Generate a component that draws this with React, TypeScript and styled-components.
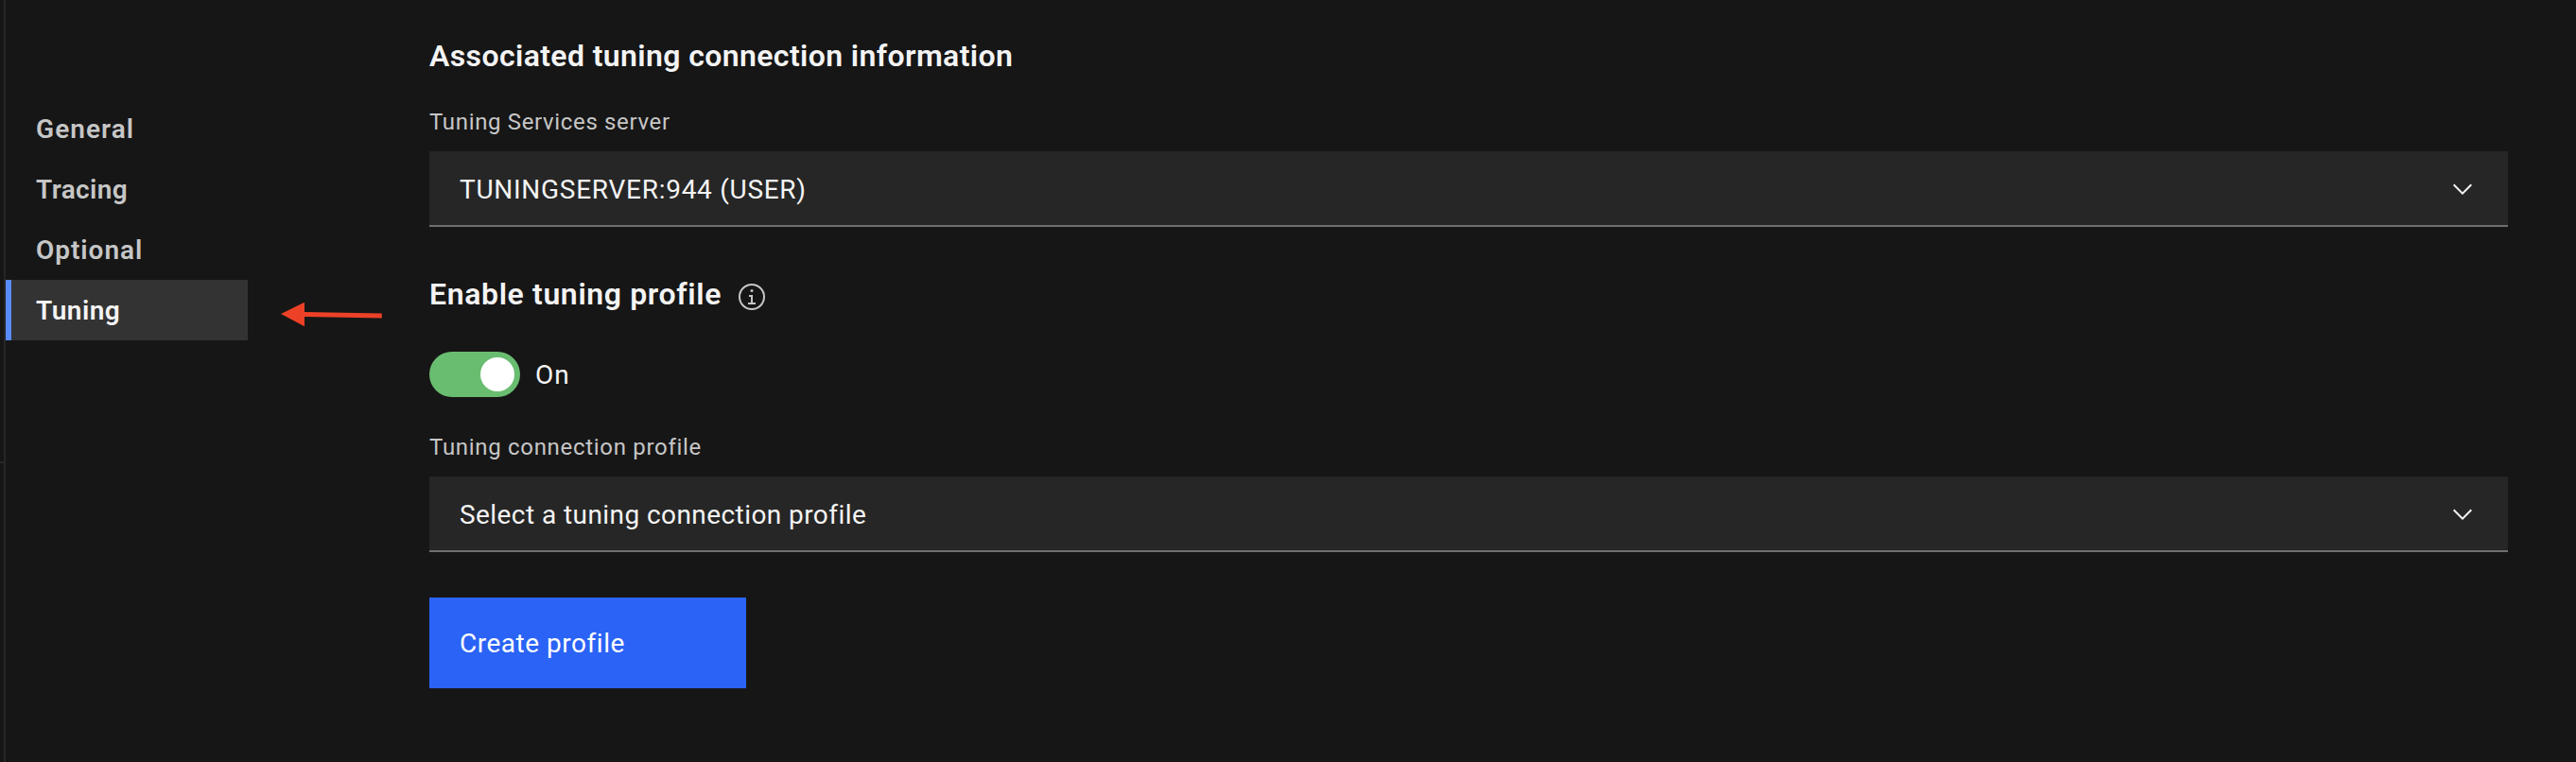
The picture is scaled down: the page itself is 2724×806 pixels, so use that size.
import React from "react";
import styled, { createGlobalStyle } from "styled-components";

const GlobalStyle = createGlobalStyle`
  * { box-sizing: border-box; }
  body {
    margin: 0;
    background: #161616;
    color: #f4f4f4;
    font-family: Roboto, "Liberation Sans", sans-serif;
    font-variant-ligatures: none;
  }
`;

const Page = styled.div`
  display: flex;
  height: 806px;
  overflow: hidden;
  background: #161616;
`;

const Rail = styled.div`
  flex: none;
  width: 6px;
  border-right: 2px solid #262626;
`;

const RailSection = styled.div`
  height: 490px;
  border-bottom: 2px solid #262626;
`;

const SideNav = styled.nav`
  flex: none;
  width: 256px;
  padding-top: 104px;
`;

const NavItem = styled.a<{ $active?: boolean; $tracking: number }>`
  display: flex;
  align-items: center;
  height: 64px;
  padding-top: 2px;
  padding-left: ${(p) => (p.$active ? 26 : 32)}px;
  border-left: ${(p) => (p.$active ? "6px solid #588bfb" : "0")};
  background: ${(p) => (p.$active ? "#333333" : "transparent")};
  color: ${(p) => (p.$active ? "#f4f4f4" : "#c6c6c6")};
  font-size: 28px;
  font-weight: 600;
  line-height: 36px;
  letter-spacing: ${(p) => p.$tracking}px;
`;

const Pointer = styled.div`
  flex: none;
  width: 192px;
  padding: 316px 0 0 34px;
`;

const Content = styled.main`
  display: flex;
  flex-direction: column;
  width: 2198px;
  padding-top: 39px;
`;

const HeadingRow = styled.div`
  display: flex;
  align-items: center;
  gap: 16px;
  height: 40px;
`;

const Heading = styled.h2<{ $tracking: number }>`
  margin: 0;
  font-size: 32px;
  font-weight: 600;
  line-height: 40px;
  letter-spacing: ${(p) => p.$tracking}px;
`;

const InfoIcon = styled.svg`
  width: 32px;
  height: 32px;
  margin-top: 6px;
`;

const Field = styled.div<{ $top: number }>`
  display: flex;
  flex-direction: column;
  gap: 15px;
  margin-top: ${(p) => p.$top}px;
`;

const Label = styled.label<{ $tracking: number }>`
  font-size: 24px;
  line-height: 32px;
  letter-spacing: ${(p) => p.$tracking}px;
  color: #c6c6c6;
`;

const Select = styled.div<{ $tracking: number }>`
  display: flex;
  align-items: center;
  justify-content: space-between;
  height: 80px;
  padding: 2px 32px 0;
  background: #262626;
  box-shadow: inset 0 -2px #6f6f6f;
  font-size: 28px;
  line-height: 36px;
  letter-spacing: ${(p) => p.$tracking}px;
`;

const ChevronIcon = styled.svg`
  width: 32px;
  height: 32px;
  margin-bottom: 2px;
`;

const ToggleGroup = styled.div`
  display: flex;
  align-items: center;
  gap: 16px;
  margin-top: 41px;
`;

const ToggleText = styled.span`
  padding-top: 2px;
  font-size: 28px;
  line-height: 36px;
  letter-spacing: 0.9px;
`;

const Toggle = styled.div`
  display: flex;
  justify-content: flex-end;
  width: 96px;
  height: 48px;
  padding: 6px;
  border-radius: 24px;
  background: #69bd70;
`;

const Knob = styled.div`
  width: 36px;
  height: 36px;
  border-radius: 50%;
  background: #ffffff;
`;

const PrimaryButton = styled.button`
  display: flex;
  align-items: center;
  width: 335px;
  height: 96px;
  margin-top: 48px;
  padding: 2px 32px 0;
  border: 0;
  background: #2a63f6;
  color: #ffffff;
  font-family: inherit;
  font-size: 28px;
  line-height: 36px;
  letter-spacing: 0.52px;
`;

const Chevron = () => (
  <ChevronIcon viewBox="0 0 16 16" fill="#f4f4f4">
    <path d="M8 11L3 6 3.7 5.3 8 9.6 12.3 5.3 13 6z" />
  </ChevronIcon>
);

const NAV = [
  { label: "General", tracking: 1.05 },
  { label: "Tracing", tracking: 0.4 },
  { label: "Optional", tracking: 0.97 },
  { label: "Tuning", tracking: 0.5, active: true },
];

export default function App() {
  return (
    <Page>
      <GlobalStyle />
      <Rail>
        <RailSection />
      </Rail>
      <SideNav>
        {NAV.map((item) => (
          <NavItem key={item.label} $active={item.active} $tracking={item.tracking}>
            {item.label}
          </NavItem>
        ))}
      </SideNav>
      <Pointer>
        <svg width="110" height="32" viewBox="0 0 110 32" fill="#ec4127">
          <path d="M1 16L26 3.8V13.9L107.8 15.4V20.4L26 19V29.2Z" />
        </svg>
      </Pointer>
      <Content>
        <HeadingRow>
          <Heading $tracking={0.38}>Associated tuning connection information</Heading>
        </HeadingRow>
        <Field $top={34}>
          <Label $tracking={0.65}>Tuning Services server</Label>
          <Select $tracking={0.72}>
            TUNINGSERVER:944 (USER)
            <Chevron />
          </Select>
        </Field>
        <Field $top={51}>
          <HeadingRow>
            <Heading $tracking={0.63}>Enable tuning profile</Heading>
            <InfoIcon viewBox="0 0 32 32" fill="#c6c6c6">
              <path d="M17 22V14H13V16H15V22H12V24H20V22Z" />
              <path d="M16 8a1.5 1.5 0 1 0 1.5 1.5A1.5 1.5 0 0 0 16 8Z" />
              <path d="M16 30A14 14 0 1 1 30 16 14 14 0 0 1 16 30ZM16 4A12 12 0 1 0 28 16 12 12 0 0 0 16 4Z" />
            </InfoIcon>
          </HeadingRow>
        </Field>
        <ToggleGroup>
          <Toggle role="switch" aria-checked="true">
            <Knob />
          </Toggle>
          <ToggleText>On</ToggleText>
        </ToggleGroup>
        <Field $top={37}>
          <Label $tracking={0.69}>Tuning connection profile</Label>
          <Select $tracking={0.43}>
            Select a tuning connection profile
            <Chevron />
          </Select>
        </Field>
        <PrimaryButton>Create profile</PrimaryButton>
      </Content>
    </Page>
  );
}
